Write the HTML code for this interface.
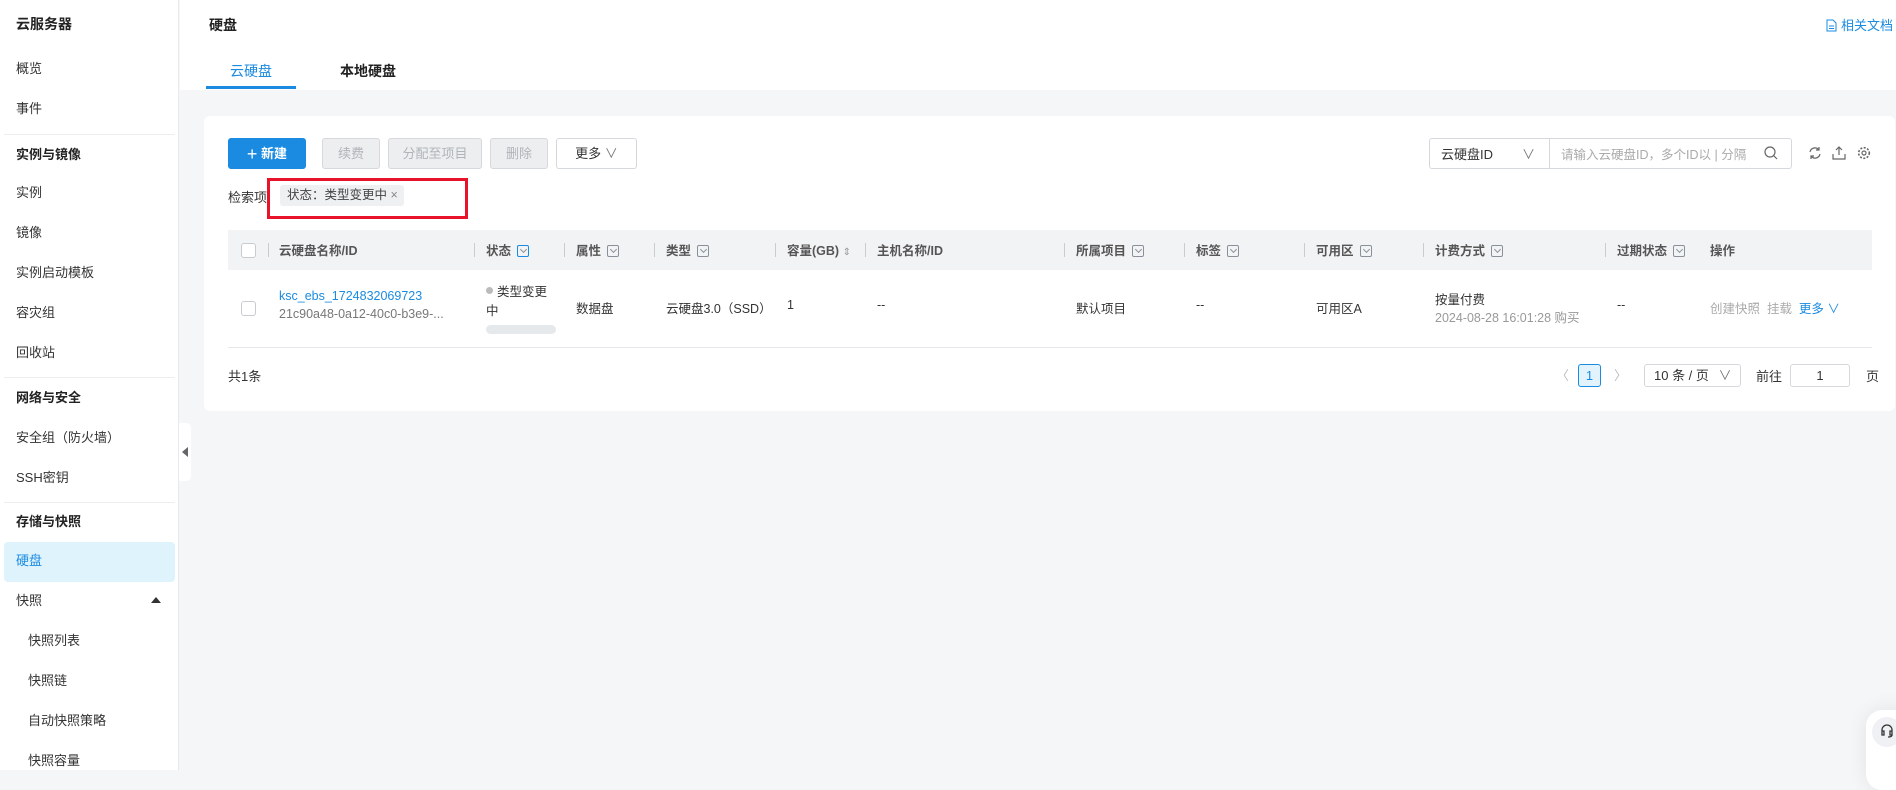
<!DOCTYPE html>
<html><head><meta charset="utf-8"><style>
*{box-sizing:border-box;margin:0;padding:0}
body{width:1896px;height:770px;overflow:hidden;background:#f5f6f8;font-family:"Liberation Sans","Noto Sans CJK SC",sans-serif;font-size:13px;color:#333;position:relative}
.a{position:absolute;white-space:nowrap}
.side{position:absolute;left:0;top:0;width:179px;height:770px;background:#fff;border-right:1px solid #e8e9eb}
.si{position:absolute;left:16px;font-size:13px;color:#333;line-height:16px}
.sh{font-weight:bold;color:#222}
.div{position:absolute;left:4px;width:171px;height:1px;background:#eceef0}
.top{position:absolute;left:180px;top:0;right:0;height:90px;background:#fff}
.card{position:absolute;left:204px;top:116px;width:1691px;height:295px;background:#fff;border-radius:6px}
.btn{position:absolute;top:138px;height:31px;border:1px solid #d5d8dc;border-radius:3px;background:#eceef0;color:#b0b4b9;font-size:13px;line-height:29px;text-align:center}
.th{position:absolute;top:230px;left:228px;width:1644px;height:40px;background:#f2f3f5}
.hc{position:absolute;top:240px;font-size:12.5px;color:#555;font-weight:bold}
.sep{position:absolute;top:243px;width:1px;height:14px;background:#ccc}
.fi{display:inline-block;width:12px;height:12px;border:1px solid #8a9099;border-radius:2px;vertical-align:-2px;margin-left:6px;position:relative}
.fi:after{content:"";position:absolute;left:3px;top:1px;width:4px;height:4px;border-right:1px solid #8a9099;border-bottom:1px solid #8a9099;transform:rotate(45deg)}
.cb{position:absolute;width:15px;height:15px;border:1px solid #c8ccd1;border-radius:3px;background:#fff}
.td{position:absolute;top:298px;font-size:12.5px;color:#333}
</style></head><body>
<div class="side">
<div class="si sh" style="top:16px;font-size:14px">云服务器</div>
<div class="si" style="top:61px">概览</div>
<div class="si" style="top:101px">事件</div>
<div class="div" style="top:134px"></div>
<div class="si sh" style="top:147px">实例与镜像</div>
<div class="si" style="top:185px">实例</div>
<div class="si" style="top:225px">镜像</div>
<div class="si" style="top:265px">实例启动模板</div>
<div class="si" style="top:305px">容灾组</div>
<div class="si" style="top:345px">回收站</div>
<div class="div" style="top:377px"></div>
<div class="si sh" style="top:390px">网络与安全</div>
<div class="si" style="top:430px">安全组（防火墙）</div>
<div class="si" style="top:470px">SSH密钥</div>
<div class="div" style="top:502px"></div>
<div class="si sh" style="top:514px">存储与快照</div>
<div style="position:absolute;left:4px;top:542px;width:171px;height:40px;background:#dff3fc;border-radius:4px"></div>
<div class="si" style="top:553px;color:#1a8be0">硬盘</div>
<div class="si" style="top:593px">快照</div>
<div class="a" style="left:151px;top:597px;width:0;height:0;border-left:5px solid transparent;border-right:5px solid transparent;border-bottom:6px solid #333"></div>
<div class="si" style="top:633px;left:28px">快照列表</div>
<div class="si" style="top:673px;left:28px">快照链</div>
<div class="si" style="top:713px;left:28px">自动快照策略</div>
<div class="si" style="top:753px;left:28px">快照容量</div>
</div>
<div class="a" style="left:179px;top:423px;width:12px;height:58px;background:#fff;border-radius:0 5px 5px 0"></div>
<div class="a" style="left:182px;top:447px;width:0;height:0;border-top:5px solid transparent;border-bottom:5px solid transparent;border-right:6px solid #666"></div>
<div class="top"></div>
<div class="a" style="left:209px;top:15px;font-size:14px;font-weight:bold;color:#222">硬盘</div>
<div class="a" style="left:1826px;top:15px;color:#1a8be0;font-size:13px"><svg width="11" height="13" viewBox="0 0 11 13" style="vertical-align:-2px;margin-right:4px"><path d="M1 1h6l3 3v8H1z M3 7h5 M3 9.5h5" fill="none" stroke="#1a8be0" stroke-width="1"/></svg>相关文档</div>
<div class="a" style="left:230px;top:61px;font-size:14px;color:#1a8be0">云硬盘</div>
<div class="a" style="left:206px;top:86px;width:90px;height:3px;background:#1a8be0"></div>
<div class="a" style="left:340px;top:61px;font-size:14px;color:#222;font-weight:bold">本地硬盘</div>
<div class="card"></div>
<div class="btn" style="left:228px;width:78px;background:#1a8be0;border-color:#1a8be0;color:#fff;font-weight:bold"><span style="font-size:18px;font-weight:normal;vertical-align:-2px">+</span> 新建</div>
<div class="btn" style="left:322px;width:58px">续费</div>
<div class="btn" style="left:388px;width:94px">分配至项目</div>
<div class="btn" style="left:490px;width:58px">删除</div>
<div class="btn" style="left:556px;width:81px;background:#fff;color:#333">更多 <span style="color:#777">∨</span></div>
<div class="a" style="left:228px;top:187px;color:#333">检索项</div>
<div class="a" style="left:280px;top:185px;width:124px;height:21px;background:#eef0f2;border-radius:3px;color:#444;font-size:12.5px;line-height:21px;padding-left:7px">状态：类型变更中 <span style="color:#888">×</span></div>
<div class="a" style="left:267px;top:178px;width:201px;height:41px;border:3px solid #e8132a"></div>
<div class="a" style="left:1429px;top:138px;width:363px;height:31px;border:1px solid #d5d8dc;border-radius:3px"></div>
<div class="a" style="left:1549px;top:139px;width:1px;height:29px;background:#d5d8dc"></div>
<div class="a" style="left:1441px;top:144px;color:#333">云硬盘ID</div>
<div class="a" style="left:1522px;top:144px;color:#777">∨</div>
<div class="a" style="left:1561px;top:144px;color:#aaa;font-size:12.5px">请输入云硬盘ID，多个ID以 | 分隔</div>
<svg class="a" style="left:1764px;top:146px" width="14" height="14"><circle cx="6" cy="6" r="5" fill="none" stroke="#666" stroke-width="1.2"/><path d="M10 10l3 3" stroke="#666" stroke-width="1.2"/></svg>
<svg class="a" style="left:1808px;top:146px" width="14" height="14"><path d="M2 6a5 5 0 0 1 9-2M12 8a5 5 0 0 1-9 2M11 1v3h-3M3 13v-3h3" fill="none" stroke="#666" stroke-width="1.2"/></svg>
<svg class="a" style="left:1832px;top:145px" width="14" height="15"><path d="M7 10V2M4 5l3-3 3 3M1 9v5h12V9" fill="none" stroke="#666" stroke-width="1.2"/></svg>
<svg class="a" style="left:1857px;top:146px" width="14" height="14"><circle cx="7" cy="7" r="2" fill="none" stroke="#666" stroke-width="1.2"/><circle cx="7" cy="7" r="5.3" fill="none" stroke="#666" stroke-width="1.6" stroke-dasharray="2 1.5"/></svg>
<div class="th"></div>
<div class="cb" style="left:241px;top:243px"></div>
<div class="sep" style="left:268px"></div>
<div class="hc" style="left:279px">云硬盘名称/ID</div>
<div class="sep" style="left:474px"></div>
<div class="hc" style="left:486px">状态<span class="fi" style="border-color:#1a8be0"></span></div>
<div class="sep" style="left:564px"></div>
<div class="hc" style="left:576px">属性<span class="fi"></span></div>
<div class="sep" style="left:654px"></div>
<div class="hc" style="left:666px">类型<span class="fi"></span></div>
<div class="sep" style="left:775px"></div>
<div class="hc" style="left:787px">容量(GB) <span style="color:#999;font-weight:normal;font-size:10px">⇕</span></div>
<div class="sep" style="left:865px"></div>
<div class="hc" style="left:877px">主机名称/ID</div>
<div class="sep" style="left:1064px"></div>
<div class="hc" style="left:1076px">所属项目<span class="fi"></span></div>
<div class="sep" style="left:1184px"></div>
<div class="hc" style="left:1196px">标签<span class="fi"></span></div>
<div class="sep" style="left:1304px"></div>
<div class="hc" style="left:1316px">可用区<span class="fi"></span></div>
<div class="sep" style="left:1423px"></div>
<div class="hc" style="left:1435px">计费方式<span class="fi"></span></div>
<div class="sep" style="left:1605px"></div>
<div class="hc" style="left:1617px">过期状态<span class="fi"></span></div>
<div class="hc" style="left:1710px">操作</div>
<div class="cb" style="left:241px;top:301px"></div>
<div class="td" style="left:279px;top:289px;color:#1a8be0">ksc_ebs_1724832069723</div>
<div class="td" style="left:279px;top:307px;color:#777">21c90a48-0a12-40c0-b3e9-...</div>
<div class="a" style="left:486px;top:287px;width:7px;height:7px;border-radius:50%;background:#bbb"></div>
<div class="td" style="left:497px;top:281px">类型变更</div>
<div class="td" style="left:486px;top:300px">中</div>
<div class="a" style="left:486px;top:325px;width:70px;height:9px;border-radius:5px;background:#e6e9ec"></div>
<div class="td" style="left:576px">数据盘</div>
<div class="td" style="left:666px">云硬盘3.0（SSD）</div>
<div class="td" style="left:787px">1</div>
<div class="td" style="left:877px">--</div>
<div class="td" style="left:1076px">默认项目</div>
<div class="td" style="left:1196px">--</div>
<div class="td" style="left:1316px">可用区A</div>
<div class="td" style="left:1435px;top:289px">按量付费</div>
<div class="td" style="left:1435px;top:307px;color:#999">2024-08-28 16:01:28 购买</div>
<div class="td" style="left:1617px">--</div>
<div class="td" style="left:1710px;color:#aaa">创建快照&nbsp; 挂载&nbsp; <span style="color:#1a8be0">更多 ∨</span></div>
<div class="a" style="left:228px;top:347px;width:1644px;height:1px;background:#e6e8eb"></div>
<div class="a" style="left:228px;top:366px">共1条</div>
<div class="a" style="left:1556px;top:365px;color:#bbb">〈</div>
<div class="a" style="left:1578px;top:364px;width:23px;height:23px;border:1px solid #1a8be0;border-radius:3px;background:#e3f3fd;color:#1a8be0;text-align:center;line-height:21px">1</div>
<div class="a" style="left:1614px;top:365px;color:#bbb">〉</div>
<div class="a" style="left:1644px;top:364px;width:97px;height:23px;border:1px solid #d5d8dc;border-radius:3px;line-height:21px;padding-left:9px">10 条 / 页 <span style="color:#777;margin-left:6px">∨</span></div>
<div class="a" style="left:1756px;top:366px">前往</div>
<div class="a" style="left:1790px;top:364px;width:60px;height:23px;border:1px solid #d5d8dc;border-radius:3px;text-align:center;line-height:21px">1</div>
<div class="a" style="left:1866px;top:366px">页</div>
<div class="a" style="left:1866px;top:710px;width:60px;height:80px;background:#fff;border-radius:16px;box-shadow:0 0 20px rgba(0,0,0,.08)"></div>
<div class="a" style="left:1872px;top:717px;width:30px;height:30px;border-radius:50%;background:#f0f1f4"></div>
<svg class="a" style="left:1880px;top:724px" width="14" height="14"><path d="M2 8V6a5 5 0 0 1 10 0v2M2 7h2v4H2zM12 7h-2v4h2zM12 11q0 2-4 2" fill="none" stroke="#333" stroke-width="1.3"/></svg>
</body></html>
